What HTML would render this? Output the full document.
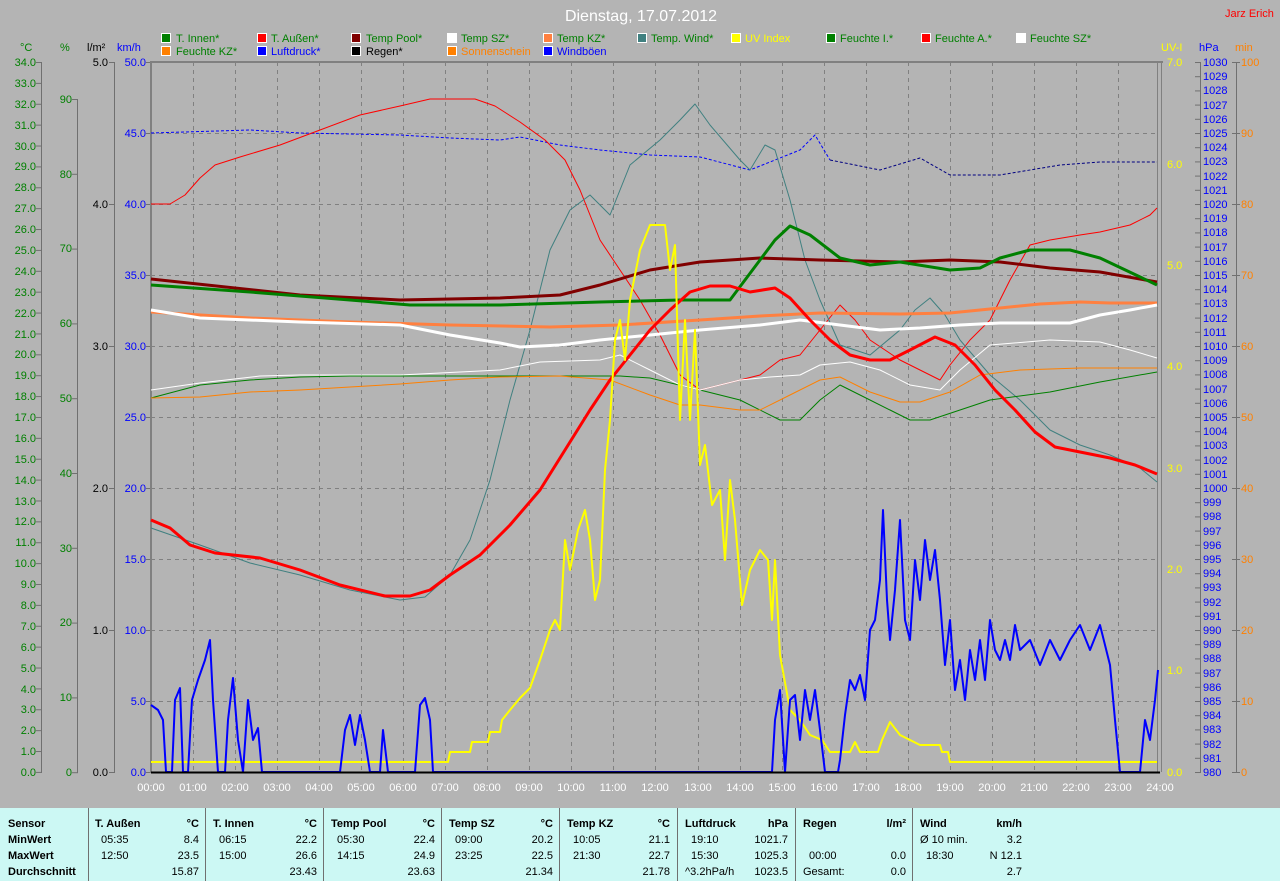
<!DOCTYPE html>
<html><head><meta charset="utf-8"><style>
html,body{margin:0;padding:0;background:#b4b4b4;}
svg{display:block;font-family:"Liberation Sans",sans-serif;}
</style></head><body>
<svg width="1280" height="881" viewBox="0 0 1280 881" xmlns="http://www.w3.org/2000/svg">
<defs>
<pattern id="tC" x="0" y="62" width="10" height="20.88" patternUnits="userSpaceOnUse"><rect x="0" y="0" width="10" height="1" fill="#707070"/></pattern>
<pattern id="t71" x="0" y="62" width="10" height="71" patternUnits="userSpaceOnUse"><rect x="0" y="0" width="10" height="1" fill="#707070"/></pattern>
<pattern id="tP" x="0" y="99" width="10" height="74.8" patternUnits="userSpaceOnUse"><rect x="0" y="0" width="10" height="1" fill="#707070"/></pattern>
<pattern id="tL" x="0" y="62" width="10" height="142" patternUnits="userSpaceOnUse"><rect x="0" y="0" width="10" height="1" fill="#707070"/></pattern>
<pattern id="tH" x="0" y="62" width="10" height="14.2" patternUnits="userSpaceOnUse"><rect x="0" y="0" width="10" height="1" fill="#707070"/></pattern>
</defs>
<rect width="1280" height="881" fill="#b4b4b4"/>
<text x="641" y="21" fill="#fff" font-size="16" text-anchor="middle">Dienstag, 17.07.2012</text>
<text x="1225" y="17" fill="#f00" font-size="11">Jarz Erich</text>

<!-- legend -->
<g font-size="11">
<g stroke="#fff" stroke-width="1">
<rect x="161.5" y="33.5" width="9" height="9" fill="#008000"/>
<rect x="257.5" y="33.5" width="9" height="9" fill="#f00"/>
<rect x="351.5" y="33.5" width="9" height="9" fill="#800000"/>
<rect x="447.5" y="33.5" width="9" height="9" fill="#fff"/>
<rect x="543.5" y="33.5" width="9" height="9" fill="#ff8040"/>
<rect x="637.5" y="33.5" width="9" height="9" fill="#408080"/>
<rect x="731.5" y="33.5" width="9" height="9" fill="#ff0"/>
<rect x="826.5" y="33.5" width="9" height="9" fill="#008000"/>
<rect x="921.5" y="33.5" width="9" height="9" fill="#f00"/>
<rect x="1016.5" y="33.5" width="9" height="9" fill="#fff"/>
<rect x="161.5" y="46.5" width="9" height="9" fill="#ff8000"/>
<rect x="257.5" y="46.5" width="9" height="9" fill="#00f"/>
<rect x="351.5" y="46.5" width="9" height="9" fill="#000"/>
<rect x="447.5" y="46.5" width="9" height="9" fill="#ff8000"/>
<rect x="543.5" y="46.5" width="9" height="9" fill="#00f"/>
</g>
<text x="176" y="42" fill="#008000">T. Innen*</text>
<text x="271" y="42" fill="#008000">T. Außen*</text>
<text x="366" y="42" fill="#008000">Temp Pool*</text>
<text x="461" y="42" fill="#008000">Temp SZ*</text>
<text x="557" y="42" fill="#008000">Temp KZ*</text>
<text x="651" y="42" fill="#008000">Temp. Wind*</text>
<text x="745" y="42" fill="#ff0">UV Index</text>
<text x="840" y="42" fill="#008000">Feuchte I.*</text>
<text x="935" y="42" fill="#008000">Feuchte A.*</text>
<text x="1030" y="42" fill="#008000">Feuchte SZ*</text>
<text x="176" y="55" fill="#008000">Feuchte KZ*</text>
<text x="271" y="55" fill="#00f">Luftdruck*</text>
<text x="366" y="55" fill="#000">Regen*</text>
<text x="461" y="55" fill="#ff8000">Sonnenschein</text>
<text x="557" y="55" fill="#00f">Windböen</text>
</g>

<!-- axis headers -->
<g font-size="11">
<text x="20" y="51" fill="#008000">°C</text>
<text x="60" y="51" fill="#008000">%</text>
<text x="87" y="51" fill="#000">l/m²</text>
<text x="117" y="51" fill="#00f">km/h</text>
<text x="1161" y="51" fill="#ff0">UV-I</text>
<text x="1199" y="51" fill="#00f">hPa</text>
<text x="1235" y="51" fill="#ff8000">min</text>
</g>

<!-- axis lines + ticks -->
<g stroke="#707070" stroke-width="1">
<line x1="41.5" y1="62" x2="41.5" y2="773"/>
<line x1="77.5" y1="99" x2="77.5" y2="773"/>
<line x1="114.5" y1="62" x2="114.5" y2="773"/>
<line x1="1200.5" y1="62" x2="1200.5" y2="773"/>
<line x1="1236.5" y1="62" x2="1236.5" y2="773"/>
</g>
<rect x="36" y="62" width="6" height="712" fill="url(#tC)"/>
<rect x="72" y="99" width="6" height="675" fill="url(#tP)"/>
<rect x="109" y="62" width="6" height="712" fill="url(#tL)"/>
<rect x="146" y="62" width="5" height="712" fill="url(#t71)"/>
<rect x="1162" y="62" width="4" height="712" fill="url(#tH)" opacity="0"/>
<rect x="1195" y="62" width="6" height="712" fill="url(#tH)"/>
<rect x="1232" y="62" width="8" height="712" fill="url(#t71)"/>

<!-- °C labels -->
<g font-size="11" fill="#008000" text-anchor="end">
<text x="36" y="66">34.0</text><text x="36" y="87">33.0</text><text x="36" y="108">32.0</text><text x="36" y="129">31.0</text><text x="36" y="150">30.0</text><text x="36" y="170">29.0</text><text x="36" y="191">28.0</text><text x="36" y="212">27.0</text><text x="36" y="233">26.0</text><text x="36" y="254">25.0</text><text x="36" y="275">24.0</text><text x="36" y="296">23.0</text><text x="36" y="317">22.0</text><text x="36" y="338">21.0</text><text x="36" y="358">20.0</text><text x="36" y="379">19.0</text><text x="36" y="400">18.0</text><text x="36" y="421">17.0</text><text x="36" y="442">16.0</text><text x="36" y="463">15.0</text><text x="36" y="484">14.0</text><text x="36" y="505">13.0</text><text x="36" y="525">12.0</text><text x="36" y="546">11.0</text><text x="36" y="567">10.0</text><text x="36" y="588">9.0</text><text x="36" y="609">8.0</text><text x="36" y="630">7.0</text><text x="36" y="651">6.0</text><text x="36" y="672">5.0</text><text x="36" y="693">4.0</text><text x="36" y="713">3.0</text><text x="36" y="734">2.0</text><text x="36" y="755">1.0</text><text x="36" y="776">0.0</text>
</g>
<g font-size="11" fill="#008000" text-anchor="end">
<text x="72" y="103">90</text><text x="72" y="178">80</text><text x="72" y="252">70</text><text x="72" y="327">60</text><text x="72" y="402">50</text><text x="72" y="477">40</text><text x="72" y="552">30</text><text x="72" y="626">20</text><text x="72" y="701">10</text><text x="72" y="776">0</text>
</g>
<g font-size="11" fill="#000" text-anchor="end">
<text x="108" y="66">5.0</text><text x="108" y="208">4.0</text><text x="108" y="350">3.0</text><text x="108" y="492">2.0</text><text x="108" y="634">1.0</text><text x="108" y="776">0.0</text>
</g>
<g font-size="11" fill="#00f" text-anchor="end">
<text x="146" y="66">50.0</text><text x="146" y="137">45.0</text><text x="146" y="208">40.0</text><text x="146" y="279">35.0</text><text x="146" y="350">30.0</text><text x="146" y="421">25.0</text><text x="146" y="492">20.0</text><text x="146" y="563">15.0</text><text x="146" y="634">10.0</text><text x="146" y="705">5.0</text><text x="146" y="776">0.0</text>
</g>
<g font-size="11" fill="#ff0">
<text x="1167" y="66">7.0</text><text x="1167" y="168">6.0</text><text x="1167" y="269">5.0</text><text x="1167" y="370">4.0</text><text x="1167" y="472">3.0</text><text x="1167" y="573">2.0</text><text x="1167" y="674">1.0</text><text x="1167" y="776">0.0</text>
</g>
<g font-size="11" fill="#00f">
<text x="1203" y="66">1030</text><text x="1203" y="80">1029</text><text x="1203" y="94">1028</text><text x="1203" y="109">1027</text><text x="1203" y="123">1026</text><text x="1203" y="137">1025</text><text x="1203" y="151">1024</text><text x="1203" y="165">1023</text><text x="1203" y="180">1022</text><text x="1203" y="194">1021</text><text x="1203" y="208">1020</text><text x="1203" y="222">1019</text><text x="1203" y="236">1018</text><text x="1203" y="251">1017</text><text x="1203" y="265">1016</text><text x="1203" y="279">1015</text><text x="1203" y="293">1014</text><text x="1203" y="307">1013</text><text x="1203" y="322">1012</text><text x="1203" y="336">1011</text><text x="1203" y="350">1010</text><text x="1203" y="364">1009</text><text x="1203" y="378">1008</text><text x="1203" y="393">1007</text><text x="1203" y="407">1006</text><text x="1203" y="421">1005</text><text x="1203" y="435">1004</text><text x="1203" y="449">1003</text><text x="1203" y="464">1002</text><text x="1203" y="478">1001</text><text x="1203" y="492">1000</text><text x="1203" y="506">999</text><text x="1203" y="520">998</text><text x="1203" y="535">997</text><text x="1203" y="549">996</text><text x="1203" y="563">995</text><text x="1203" y="577">994</text><text x="1203" y="591">993</text><text x="1203" y="606">992</text><text x="1203" y="620">991</text><text x="1203" y="634">990</text><text x="1203" y="648">989</text><text x="1203" y="662">988</text><text x="1203" y="677">987</text><text x="1203" y="691">986</text><text x="1203" y="705">985</text><text x="1203" y="719">984</text><text x="1203" y="733">983</text><text x="1203" y="748">982</text><text x="1203" y="762">981</text><text x="1203" y="776">980</text>
</g>
<g font-size="11" fill="#ff8000">
<text x="1241" y="66">100</text><text x="1241" y="137">90</text><text x="1241" y="208">80</text><text x="1241" y="279">70</text><text x="1241" y="350">60</text><text x="1241" y="421">50</text><text x="1241" y="492">40</text><text x="1241" y="563">30</text><text x="1241" y="634">20</text><text x="1241" y="705">10</text><text x="1241" y="776">0</text>
</g>

<!-- grid -->
<g stroke="#808080" stroke-width="1" stroke-dasharray="4,4">
<path d="M193.5 62V772M235.5 62V772M277.5 62V772M319.5 62V772M361.5 62V772M403.5 62V772M445.5 62V772M487.5 62V772M529.5 62V772M571.5 62V772M613.5 62V772M655.5 62V772M698.5 62V772M740.5 62V772M782.5 62V772M824.5 62V772M866.5 62V772M908.5 62V772M950.5 62V772M992.5 62V772M1034.5 62V772M1076.5 62V772M1118.5 62V772"/>
<path d="M151 133.5H1157M151 204.5H1157M151 275.5H1157M151 346.5H1157M151 417.5H1157M151 488.5H1157M151 559.5H1157M151 630.5H1157M151 701.5H1157"/>
</g>
<g stroke="#808080" stroke-width="2" fill="none">
<path d="M151 773V62H1163"/>
</g>
<g stroke="#808080" stroke-width="1"><line x1="1157.5" y1="62" x2="1157.5" y2="772"/><line x1="1161.5" y1="62" x2="1161.5" y2="772"/></g>

<!-- data -->
<g fill="none" stroke-linejoin="round">
<!-- Luftdruck -->
<polyline stroke="#00f" stroke-width="1" stroke-dasharray="3,2" points="151,133 250,130 300,133 400,135 450,138 500,140 520,137 560,145 600,150 650,155 700,157 750,170 780,158 800,150 815,135 830,160"/>
<polyline stroke="#000080" stroke-width="1" stroke-dasharray="3,2" points="830,160 880,170 920,158 950,175 1000,175 1060,165 1100,162 1157,162"/>
<!-- Feuchte A -->
<polyline stroke="#f00" stroke-width="1" points="151,204 170,204 185,195 200,178 215,165 240,157 280,145 320,130 360,115 400,106 430,99 475,99 495,106 520,122 545,140 565,160 580,190 600,240 620,270 640,300 660,335 680,375 700,390 720,385 740,380 760,375 780,360 800,355 820,330 840,305 855,320 870,340 900,360 920,370 940,380 950,365 970,340 990,320 1010,280 1030,245 1050,240 1080,235 1100,232 1130,225 1150,215 1157,208"/>
<!-- Temp Wind -->
<polyline stroke="#408080" stroke-width="1" points="151,528 200,545 250,563 300,575 350,590 400,600 425,597 450,575 470,540 490,480 510,400 530,330 550,250 570,210 590,195 610,215 630,165 660,140 680,120 695,104 710,125 740,160 750,170 765,145 775,150 790,200 805,260 820,300 840,345 870,355 900,330 915,310 930,298 945,315 960,340 990,375 1020,400 1050,430 1080,445 1110,455 1140,468 1157,482"/>
<!-- Feuchte I -->
<polyline stroke="#008000" stroke-width="1" points="151,398 200,385 250,380 300,377 350,376 450,376 550,376 620,376 650,378 700,390 740,400 780,420 800,420 820,400 840,385 860,395 890,410 910,420 930,420 960,410 990,400 1050,392 1100,382 1157,372"/>
<!-- Feuchte KZ -->
<polyline stroke="#ff8000" stroke-width="1" points="151,398 200,397 250,392 300,390 350,387 400,384 450,380 500,377 560,376 610,380 650,395 680,405 700,405 740,410 760,410 790,395 820,380 840,377 870,392 900,402 920,402 950,392 980,375 1020,370 1080,368 1157,368"/>
<!-- Feuchte SZ -->
<polyline stroke="#fff" stroke-width="1" points="151,390 200,383 260,376 300,375 400,375 500,370 540,362 600,360 620,355 650,370 680,385 700,390 740,380 770,377 800,375 820,365 850,362 880,370 910,385 940,390 960,370 990,345 1050,340 1100,342 1130,350 1157,358"/>
<!-- Temp Pool -->
<polyline stroke="#800000" stroke-width="3" points="151,279 300,295 400,300 500,298 560,295 600,285 650,270 700,262 760,258 820,260 900,262 950,260 1000,262 1050,268 1100,272 1157,282"/>
<!-- T Innen -->
<polyline stroke="#008000" stroke-width="3" points="151,285 250,292 350,300 410,305 500,305 600,302 680,300 730,300 760,260 775,240 790,226 810,235 840,258 870,265 900,262 950,270 980,268 1000,258 1030,250 1070,250 1100,258 1157,285"/>
<!-- Temp KZ -->
<polyline stroke="#ff8040" stroke-width="3" points="151,312 250,318 350,322 450,325 550,327 620,325 700,320 760,316 820,313 900,314 950,313 1000,308 1040,304 1080,302 1110,303 1157,303"/>
<!-- Temp SZ -->
<polyline stroke="#fff" stroke-width="3" points="151,310 200,318 300,322 400,325 450,335 500,343 520,347 560,345 600,340 650,335 700,330 760,325 800,320 840,325 880,330 920,328 960,325 1000,323 1070,323 1100,315 1130,310 1157,305"/>
<!-- T Außen -->
<polyline stroke="#f00" stroke-width="3" points="151,520 170,528 190,545 215,553 260,558 300,570 340,585 385,596 410,596 430,590 450,575 480,555 510,525 540,490 565,450 590,410 610,380 630,355 650,330 670,310 690,292 710,286 730,286 750,292 775,288 790,298 810,320 830,340 850,355 870,360 890,360 910,350 935,337 955,345 975,365 995,390 1015,410 1035,432 1055,447 1080,452 1110,458 1135,465 1157,474"/>
<!-- UV -->
<polyline stroke="#ff0" stroke-width="2" points="151,762 448,762 450,752 470,752 472,742 488,742 490,732 500,732 502,720 510,710 520,698 530,688 540,660 550,630 555,620 560,630 565,540 570,570 578,530 585,510 590,540 595,600 600,580 605,470 610,420 615,340 620,320 625,360 630,300 640,250 650,225 665,225 670,270 675,245 680,420 685,320 690,420 695,330 700,465 705,445 712,505 720,490 725,560 730,480 735,520 742,605 750,570 760,550 768,560 772,620 775,560 780,655 790,710 800,720 810,735 822,740 830,752 850,752 855,742 860,752 878,752 882,740 890,722 900,735 920,745 940,745 942,752 948,752 950,762 1157,762"/>
<!-- Windböen -->
<polyline stroke="#00f" stroke-width="2" points="151,705 158,710 163,720 166,772 172,772 175,700 180,688 183,772 188,772 192,700 198,680 205,660 210,640 213,700 218,772 225,772 228,720 233,678 238,740 243,772 248,700 253,740 258,728 262,772 340,772 345,730 350,715 355,745 360,715 365,740 370,772 380,772 383,730 388,772 415,772 420,705 425,698 430,720 433,772 772,772 775,720 780,690 785,772 790,700 795,695 800,740 805,690 810,720 815,690 820,730 825,772 838,772 840,760 845,715 850,680 855,690 860,675 865,700 870,630 875,620 880,580 883,510 887,600 890,640 895,590 900,520 905,620 910,640 915,560 920,600 925,540 930,580 935,550 940,600 945,665 950,620 955,690 960,660 965,700 970,650 975,680 980,640 985,680 990,620 995,650 1000,660 1005,640 1010,660 1015,625 1020,650 1030,640 1040,665 1050,640 1060,660 1070,640 1080,625 1090,650 1100,625 1110,665 1115,720 1120,772 1140,772 1145,720 1150,740 1155,700 1158,670"/>
</g>
<line x1="151" y1="772.5" x2="1160" y2="772.5" stroke="#000" stroke-width="2"/>

<!-- time labels -->
<g font-size="11" fill="#fff" text-anchor="middle">
<text x="151" y="791">00:00</text><text x="193" y="791">01:00</text><text x="235" y="791">02:00</text><text x="277" y="791">03:00</text><text x="319" y="791">04:00</text><text x="361" y="791">05:00</text><text x="403" y="791">06:00</text><text x="445" y="791">07:00</text><text x="487" y="791">08:00</text><text x="529" y="791">09:00</text><text x="571" y="791">10:00</text><text x="613" y="791">11:00</text><text x="655" y="791">12:00</text><text x="698" y="791">13:00</text><text x="740" y="791">14:00</text><text x="782" y="791">15:00</text><text x="824" y="791">16:00</text><text x="866" y="791">17:00</text><text x="908" y="791">18:00</text><text x="950" y="791">19:00</text><text x="992" y="791">20:00</text><text x="1034" y="791">21:00</text><text x="1076" y="791">22:00</text><text x="1118" y="791">23:00</text><text x="1160" y="791">24:00</text>
</g>

<!-- table -->
<rect x="0" y="808" width="1280" height="73" fill="#ccf8f4"/>
<g stroke="#707070" stroke-width="1">
<path d="M88.5 808V881M205.5 808V881M323.5 808V881M441.5 808V881M559.5 808V881M677.5 808V881M795.5 808V881M912.5 808V881"/>
</g>
<g font-size="11" fill="#000">
<g font-weight="bold">
<text x="8" y="827">Sensor</text><text x="8" y="843">MinWert</text><text x="8" y="859">MaxWert</text><text x="8" y="875">Durchschnitt</text>
<text x="95" y="827">T. Außen</text><text x="199" y="827" text-anchor="end">°C</text>
<text x="213" y="827">T. Innen</text><text x="317" y="827" text-anchor="end">°C</text>
<text x="331" y="827">Temp Pool</text><text x="435" y="827" text-anchor="end">°C</text>
<text x="449" y="827">Temp SZ</text><text x="553" y="827" text-anchor="end">°C</text>
<text x="567" y="827">Temp KZ</text><text x="670" y="827" text-anchor="end">°C</text>
<text x="685" y="827">Luftdruck</text><text x="788" y="827" text-anchor="end">hPa</text>
<text x="803" y="827">Regen</text><text x="906" y="827" text-anchor="end">l/m²</text>
<text x="920" y="827">Wind</text><text x="1022" y="827" text-anchor="end">km/h</text>
</g>
<text x="101" y="843">05:35</text><text x="199" y="843" text-anchor="end">8.4</text>
<text x="101" y="859">12:50</text><text x="199" y="859" text-anchor="end">23.5</text>
<text x="199" y="875" text-anchor="end">15.87</text>
<text x="219" y="843">06:15</text><text x="317" y="843" text-anchor="end">22.2</text>
<text x="219" y="859">15:00</text><text x="317" y="859" text-anchor="end">26.6</text>
<text x="317" y="875" text-anchor="end">23.43</text>
<text x="337" y="843">05:30</text><text x="435" y="843" text-anchor="end">22.4</text>
<text x="337" y="859">14:15</text><text x="435" y="859" text-anchor="end">24.9</text>
<text x="435" y="875" text-anchor="end">23.63</text>
<text x="455" y="843">09:00</text><text x="553" y="843" text-anchor="end">20.2</text>
<text x="455" y="859">23:25</text><text x="553" y="859" text-anchor="end">22.5</text>
<text x="553" y="875" text-anchor="end">21.34</text>
<text x="573" y="843">10:05</text><text x="670" y="843" text-anchor="end">21.1</text>
<text x="573" y="859">21:30</text><text x="670" y="859" text-anchor="end">22.7</text>
<text x="670" y="875" text-anchor="end">21.78</text>
<text x="691" y="843">19:10</text><text x="788" y="843" text-anchor="end">1021.7</text>
<text x="691" y="859">15:30</text><text x="788" y="859" text-anchor="end">1025.3</text>
<text x="685" y="875">^3.2hPa/h</text><text x="788" y="875" text-anchor="end">1023.5</text>
<text x="809" y="859">00:00</text><text x="906" y="859" text-anchor="end">0.0</text>
<text x="803" y="875">Gesamt:</text><text x="906" y="875" text-anchor="end">0.0</text>
<text x="920" y="843">Ø 10 min.</text><text x="1022" y="843" text-anchor="end">3.2</text>
<text x="926" y="859">18:30</text><text x="1022" y="859" text-anchor="end">N 12.1</text>
<text x="1022" y="875" text-anchor="end">2.7</text>
</g>
</svg>
</body></html>
